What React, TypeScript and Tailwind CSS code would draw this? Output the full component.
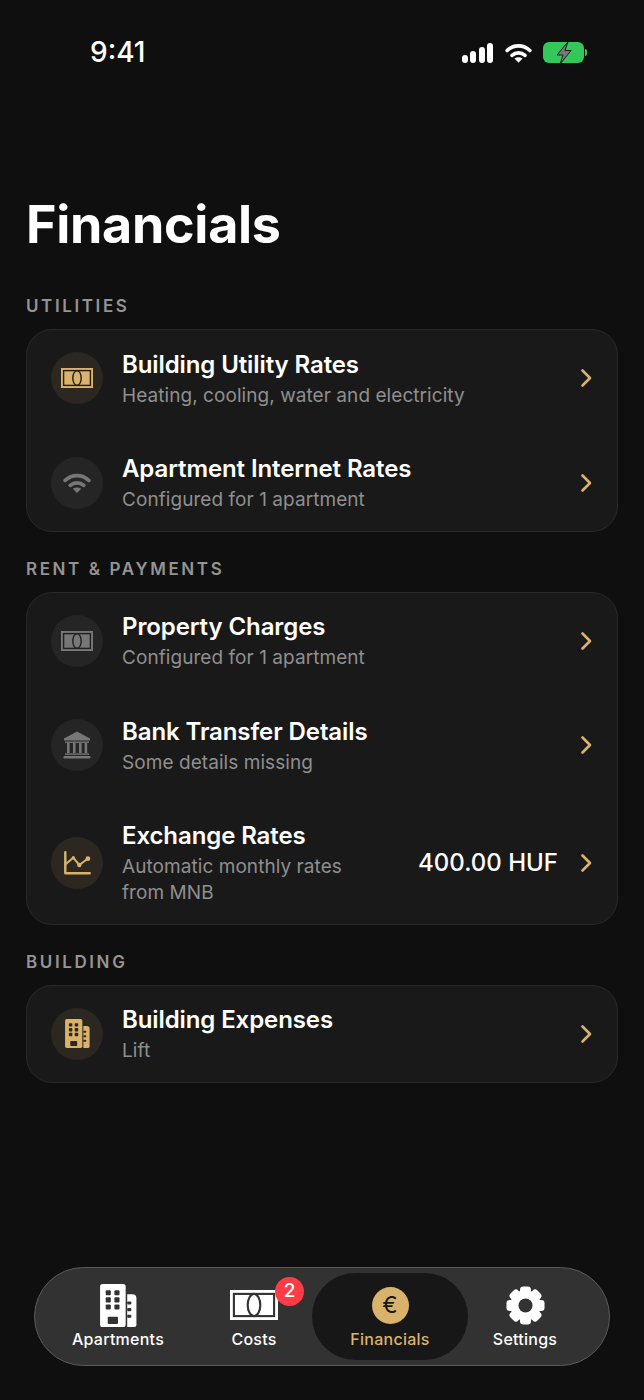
const gold = "#d9b36c";

const Note = ({ color, line, className }: { color: string; line: string; className: string }) => (
  <svg viewBox="0 0 32 20" className={className}>
    <rect x="0" y="0" width="32" height="20" fill={color} />
    <rect x="2.6" y="2.6" width="26.8" height="14.8" fill="none" stroke={line} strokeWidth="1.4" />
    <ellipse cx="16" cy="10" rx="4.2" ry="7.4" fill="none" stroke={line} strokeWidth="1.4" />
  </svg>
);

const Building = ({ color, hole, className }: { color: string; hole: string; className: string }) => (
  <svg viewBox="0 0 36 42" className={className}>
    <rect x="0" y="0" width="25" height="42" rx="2.5" fill={color} />
    <path d="M26.5 10h5a4 4 0 0 1 4 4v26a2 2 0 0 1-2 2h-7z" fill={color} />
    {[6, 13, 20].map((y) =>
      [5.5, 14].map((x) => <rect key={`${x}-${y}`} x={x} y={y} width="5" height="5" rx="1" fill={hole} />),
    )}
    <rect x="7.5" y="32" width="10" height="7" rx="1" fill={hole} />
    {[17, 23.5, 30].map((y) => (
      <rect key={y} x="26.5" y={y} width="4" height="3" rx="0.8" fill={hole} />
    ))}
  </svg>
);

const Wifi = ({ color, className }: { color: string; className: string }) => (
  <svg viewBox="0 0 28 20" className={className} fill="none" stroke={color} strokeLinecap="round">
    <path d="M2.2 7.4C9 1 19 1 25.8 7.4" strokeWidth="3.7" />
    <path d="M7.2 12.4c4-3.4 9.6-3.4 13.6 0" strokeWidth="3.7" />
    <path d="M14 20l-4.2-4.2c2.4-1.7 6-1.7 8.4 0z" fill={color} stroke="none" />
  </svg>
);

const Bank = () => (
  <svg viewBox="0 0 28 28" className="w-[28px] h-[28px]" fill="#777777">
    <path d="M14 0.5L27 7.6V9.5H1V7.6z" />
    <rect x="2" y="10.5" width="24" height="1.4" />
    {[4, 10, 16, 21.6].map((x) => (
      <rect key={x} x={x} y="12" width="2.6" height="10" />
    ))}
    <rect x="2" y="22.4" width="24" height="1.4" />
    <rect x="0.5" y="25" width="27" height="2.4" rx="1.2" />
  </svg>
);

const Chart = () => (
  <svg viewBox="0 0 27 24" className="w-[27px] h-[24px]" fill="none" stroke={gold} strokeWidth="2.4" strokeLinecap="round" strokeLinejoin="round">
    <path d="M1.3 1.3v21h24.4" />
    <path d="M1.5 13.3L9.3 6.7l6 7.3 8.4-6.3" strokeWidth="2" />
    <circle cx="15.3" cy="14" r="2.2" fill={gold} stroke="none" />
    <circle cx="23.9" cy="7.7" r="2.4" fill={gold} stroke="none" />
    <circle cx="9.3" cy="6.7" r="1.6" fill={gold} stroke="none" />
  </svg>
);

const Gear = () => (
  <svg viewBox="0 0 40 40" className="w-[39px] h-[39px]">
    {[0, 45, 90, 135, 180, 225, 270, 315].map((a) => (
      <rect key={a} x="14.4" y="0.5" width="11.2" height="10" rx="3.4" fill="white" transform={`rotate(${a} 20 20)`} />
    ))}
    <circle cx="20" cy="20" r="15.6" fill="white" />
    <circle cx="20" cy="20" r="7.2" fill="#323232" />
  </svg>
);

const Chevron = () => (
  <svg viewBox="0 0 12 20" className="w-[12px] h-[20px] shrink-0" fill="none" stroke={gold} strokeWidth="2.6" strokeLinecap="round" strokeLinejoin="round">
    <path d="M2.5 2.5l7.5 7.5-7.5 7.5" />
  </svg>
);

type RowProps = {
  icon: React.ReactNode;
  active: boolean;
  title: string;
  sub: string;
  value?: string;
  tall?: boolean;
};

const Row = ({ icon, active, title, sub, value, tall }: RowProps) => (
  <div className={`flex items-center pl-6 pr-6 ${tall ? "h-[122px]" : "h-[96px]"}`}>
    <div className={`w-[52px] h-[52px] rounded-full flex items-center justify-center shrink-0 ${active ? "bg-[#2c2821]" : "bg-[#252525]"}`}>
      {icon}
    </div>
    <div className="ml-[19px] pt-[2px] flex-1 min-w-0">
      <div className="text-[24px] leading-[30px] font-[560] tracking-[-0.1px] text-white">{title}</div>
      <div className={`text-[19px] leading-[26px] mt-[3px] tracking-[0.06px] text-[#8f8f8f] ${tall ? "max-w-[240px]" : ""}`}>{sub}</div>
    </div>
    {value && <div className="text-[24px] font-medium text-white mr-[22px]">{value}</div>}
    <div className="mr-[1px]">
      <Chevron />
    </div>
  </div>
);

const Section = ({ label, children }: { label: string; children: React.ReactNode }) => (
  <section>
    <h2 className="text-[17px] leading-[20px] font-semibold tracking-[2.6px] text-[#949494]">{label}</h2>
    <div className="mt-[13px] rounded-[26px] border border-[#292929] bg-[#191919] flex flex-col gap-[8.5px]">{children}</div>
  </section>
);

const Tab = ({ label, children, active }: { label: string; children: React.ReactNode; active?: boolean }) => (
  <div className={`flex flex-col items-center h-[87px] shrink-0 rounded-[44px] ${active ? "w-[156px] -mx-[10px] bg-[#171717]" : "w-[136px]"}`}>
    <div className="h-[48px] mt-[8px] flex items-center justify-center relative">{children}</div>
    <div className={`text-[16px] leading-[20px] font-medium tracking-[0.25px] ${active ? "text-[#d9b36c]" : "text-white"}`}>{label}</div>
  </div>
);

export default function App() {
  return (
    <div className="w-[644px] h-[1400px] bg-[#0f0f0f] flex flex-col font-['Inter',sans-serif]">
      <div className="h-[105px] flex items-start justify-between pt-[36px] pl-[90px] pr-[57px]">
        <div className="text-[28px] leading-[32px] font-medium text-white">9:41</div>
        <div className="flex items-center gap-[12px] mt-[6px]">
          <div className="flex items-end gap-[2.5px] h-[20px]">
            <div className="w-[6px] h-[8px] rounded-[3px] bg-white" />
            <div className="w-[6px] h-[12px] rounded-[3px] bg-white" />
            <div className="w-[6px] h-[16px] rounded-[3px] bg-white" />
            <div className="w-[6px] h-[20px] rounded-[3px] bg-white" />
          </div>
          <Wifi color="white" className="w-[27px] h-[20px]" />
          <div className="flex items-center -ml-[1px]">
            <div className="w-[41px] h-[21px] rounded-[6px] bg-[#34c759] flex items-center justify-center">
              <svg viewBox="0 0 18 24" className="w-[18px] h-[24px] -my-[2px]">
                <path d="M13 0.8L2 14h6L5 23.2 16 9.5h-6z" fill="#777777" stroke="#1c1c1c" strokeWidth="1" strokeLinejoin="round" />
              </svg>
            </div>
            <div className="w-[2px] h-[7px] ml-[1px] rounded-r-[2px] bg-[#34c759]" />
          </div>
        </div>
      </div>

      <h1 className="ml-[26px] mt-[88px] text-[52px] leading-[64px] font-bold text-white tracking-[-0.3px]">Financials</h1>

      <div className="mx-[26px] mt-[39px] flex flex-col gap-[27px]">
        <Section label="UTILITIES">
          <Row active icon={<Note color={gold} line="#221d13" className="w-[32px] h-[20px]" />} title="Building Utility Rates" sub="Heating, cooling, water and electricity" />
          <Row active={false} icon={<Wifi color="#777777" className="w-[28px] h-[20px]" />} title="Apartment Internet Rates" sub="Configured for 1 apartment" />
        </Section>
        <Section label="RENT &amp; PAYMENTS">
          <Row active={false} icon={<Note color="#777777" line="#202020" className="w-[32px] h-[20px]" />} title="Property Charges" sub="Configured for 1 apartment" />
          <Row active={false} icon={<Bank />} title="Bank Transfer Details" sub="Some details missing" />
          <Row active tall icon={<Chart />} title="Exchange Rates" sub="Automatic monthly rates from MNB" value="400.00 HUF" />
        </Section>
        <Section label="BUILDING">
          <Row active icon={<Building color={gold} hole="#2c2821" className="w-[25px] h-[29px]" />} title="Building Expenses" sub="Lift" />
        </Section>
      </div>

      <div className="mt-auto mb-[34px] mx-[34px] h-[99px] rounded-[50px] border border-[#5a5a5a] bg-[#323232] flex items-center">
        <div className="flex items-center pl-[15px]">
          <Tab label="Apartments">
            <Building color="white" hole="#323232" className="w-[37px] h-[43px]" />
          </Tab>
          <Tab label="Costs">
            <Note color="white" line="#323232" className="w-[48px] h-[30px]" />
            <div className="absolute -top-[4px] left-[45px] w-[29px] h-[29px] rounded-full bg-[#ff3b47] text-white text-[19px] font-medium flex items-center justify-center">2</div>
          </Tab>
          <Tab label="Financials" active>
            <div className="w-[37px] h-[37px] rounded-full bg-[#d9b36c] text-[#171717] text-[23px] flex items-center justify-center">€</div>
          </Tab>
          <div className="-ml-[1px]">
            <Tab label="Settings">
              <Gear />
            </Tab>
          </div>
        </div>
      </div>
    </div>
  );
}
